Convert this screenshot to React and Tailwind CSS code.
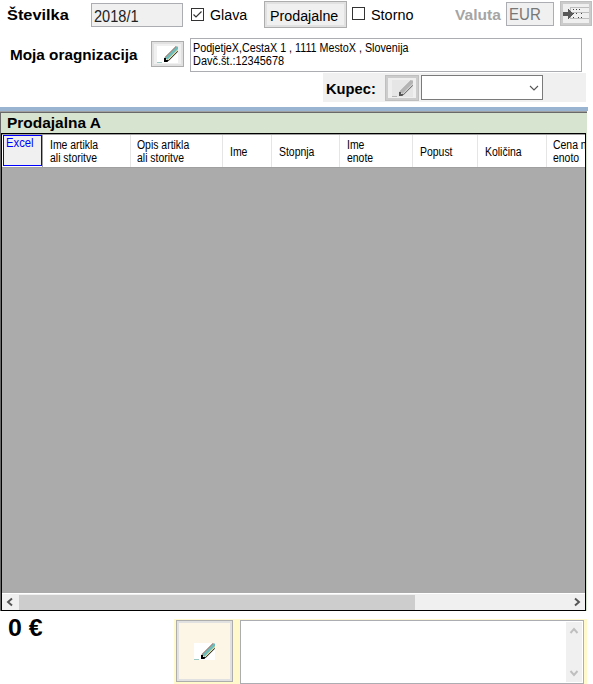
import React from "react";

function Pencil({ disabled = false, className = "" }) {
  const body = disabled ? "#b4b4b4" : "#6dbcbc";
  const edge = disabled ? "#8f8f8f" : "#6b3a2a";
  const dark = disabled ? "#555555" : "#000000";
  return (
    <svg width="21" height="17" viewBox="0 0 21 17" className={className}>
      <rect width="21" height="17" fill={disabled ? "#e6e6e6" : "#ffffff"} />
      <path d="M8 12 19.5 .5H21V4.5L11 14.5z" fill={body} />
      <path d="M10.3 13.8 21 3.1V4.8L11.2 14.6z" fill={disabled ? "#d0d0d0" : "#e6dca0"} />
      <path d="M7.6 11.9 19.5 0" fill="none" stroke={edge} strokeWidth="0.9" />
      <path d="M11 15.2 21 5.2" fill="none" stroke={dark} strokeWidth="0.9" />
      <path d="M7 12h2v2h2v1.3L10.300 16H7z" fill={dark} />
      <path d="M0 16h5v1H0z" fill={disabled ? "#b5b5b5" : "#9cc8c4"} />
    </svg>
  );
}

function Chevron({ d, color, className = "" }) {
  return (
    <svg width="10" height="10" viewBox="0 0 10 10" className={className}>
      <path d={d} fill="none" stroke={color} strokeWidth="1.9" />
    </svg>
  );
}

function Check({ checked }) {
  return (
    <span className="flex h-[13px] w-[13px] items-center justify-center border border-[#333] bg-white">
      {checked && (
        <svg width="11" height="11" viewBox="0 0 11 11">
          <path d="M1.500 5.500 4 8l5.500-5.500" fill="none" stroke="#333" strokeWidth="1.2" />
        </svg>
      )}
    </span>
  );
}

const columns = [
  { lines: ["Ime artikla", "ali storitve"], cell: "w-[88px] pl-[7px]" },
  { lines: ["Opis artikla", "ali storitve"], cell: "w-[92px] pl-[6px]" },
  { lines: ["Ime"], cell: "w-[49px] pl-[7px]" },
  { lines: ["Stopnja"], cell: "w-[68px] pl-[7px]" },
  { lines: ["Ime", "enote"], cell: "w-[73px] pl-[7px]" },
  { lines: ["Popust"], cell: "w-[65px] pl-[7px]" },
  { lines: ["Količina"], cell: "w-[69px] pl-[7px]" },
  { lines: ["Cena na", "enoto"], cell: "w-[69px] pl-[6px]" },
];

export default function App() {
  return (
    <div className="h-[684px] w-[593px] overflow-hidden bg-white font-['Liberation_Sans',Arial,sans-serif] whitespace-nowrap text-black">
      <div className="flex h-[38px] items-start">
        <div className="ml-[7px] w-[84px] pt-[5px] text-[15px] leading-5 font-bold">
          <span className="inline-block origin-left scale-x-[1.09]">Številka</span>
        </div>
        <div className="mt-[3px] h-6 w-[92px] border border-[#abadb3] bg-[#f0f0f0] pl-[2px] text-[16px] leading-[25px] text-[#222]">
          <span className="inline-block origin-left scale-x-[.91]">2018/1</span>
        </div>
        <div className="mt-2 ml-2"><Check checked /></div>
        <span className="mt-[5px] ml-[6px] w-[54px] text-[14px] leading-5">
          <span className="inline-block origin-left scale-x-[1.02]">Glava</span>
        </span>
        <div className="mt-px h-[27px] w-[83px] border border-[#adadad] bg-[#f0f0f0]">
          <div className="h-full border-2 border-[#e1e1e1] pl-[3px] text-[14px] leading-[24px]">
            <span className="inline-block origin-left scale-x-[1.02]">Prodajalne</span>
          </div>
        </div>
        <div className="mt-[7px] ml-[5px]"><Check /></div>
        <span className="mt-[5px] ml-[6px] w-[84px] text-[14px] leading-5"><span className="inline-block origin-left scale-x-[1.03]">Storno</span></span>
        <span className="mt-[5px] w-[51px] text-[14px] leading-5 font-bold text-[#a5a5a5]"><span className="inline-block origin-left scale-x-[1.11]">Valuta</span></span>
        <div className="mt-[2px] h-6 w-12 border border-[#abadb3] bg-[#f0f0f0] pl-[2px] text-[16px] leading-[24px] text-[#777]">
          <span className="inline-block origin-left scale-x-[.94]">EUR</span>
        </div>
        <div className="mt-px ml-[6px] h-[25px] w-8 border border-[#bfbfbf] bg-[#cccccc]">
          <svg width="30" height="23" viewBox="0 0 30 23" shapeRendering="crispEdges">
            <rect x="2" y="2" width="26" height="19" fill="#efefef" />
            <path d="M9 5.500h19M9 10.500h19M9 16.500h19M9.500 5v12" stroke="#bdbdbd" fill="none" />
            <path d="M12 7.500h1m2 0h1m2 0h1M12 11.500h1m2 0h1m4 0h1M12 15.500h1m4 0h1m2 0h1" stroke="#444" />
            <path d="M2 10h5V7h1l4 5-4 5H7v-3H2z" fill="#595959" />
          </svg>
        </div>
      </div>

      <div className="flex h-[35px] items-start">
        <div className="ml-[10px] w-[141px] pt-[7px] text-[14px] leading-5 font-bold">
          <span className="inline-block origin-left scale-x-[1.093]">Moja oragnizacija</span>
        </div>
        <div className="mt-[3px] h-[26px] w-[33px] border border-[#adadad] bg-[#e1e1e1] p-[2px]">
          <div className="flex h-full items-center justify-center bg-[#f0f0f0]"><Pencil /></div>
        </div>
        <div className="ml-[6px] h-[34px] w-[392px] border border-[#abadb3] pt-[3px] pl-[2px] text-[12px] leading-[13px]">
          <div className="w-fit origin-left scale-x-[.895]">PodjetjeX,CestaX 1 , 1111 MestoX , Slovenija</div>
          <div className="w-fit origin-left scale-x-[.91]">Davč.št.:12345678</div>
        </div>
      </div>

      <div className="ml-[323px] flex h-[29px] w-[263px] items-start bg-[#f0f0f0]">
        <span className="mt-[6px] ml-[3px] w-[59px] text-[14px] leading-5 font-bold"><span className="inline-block origin-left scale-x-[1.05]">Kupec:</span></span>
        <div className="mt-[2px] h-[26px] w-[34px] border border-[#bfbfbf] bg-[#cccccc] p-[2px]">
          <div className="flex h-full items-center justify-center bg-[#efefef]"><Pencil disabled /></div>
        </div>
        <div className="mt-[2px] ml-[2px] flex h-[25px] w-[122px] items-center justify-end border border-[#7a7a7a] bg-white pr-[3px]">
          <svg width="10" height="8" viewBox="0 0 10 8"><path d="M1 2l4 4 4-4" fill="none" stroke="#555" strokeWidth="1.1" /></svg>
        </div>
      </div>

      <div className="mt-[5px] h-[4px] w-[588px] bg-[#99b4d1]" />
      <div className="h-px w-[587px] bg-[#a0a0a0]" />
      <div className="flex h-[499px] w-[587px] flex-col border-t border-l border-[#696969] bg-[#d7e4d0]">
        <div className="h-[20px] w-[586px] pl-[6px] text-[15px] leading-[19px] font-bold">
          <span className="inline-block origin-left scale-x-[1.03]">Prodajalna A</span>
        </div>
        <div className="flex h-[478px] w-[585px] flex-col border border-black bg-[#ababab]">
          <div className="flex h-[34px] w-full shrink-0 overflow-hidden border-t border-b border-[#a0a0a0] bg-white">
            <div className="h-full w-[41px] shrink-0 border-r border-[#a0a0a0] pl-px">
              <div className="h-[31px] w-[39px] border border-[#0000ff] bg-[#f0f0f0] pl-[2px] text-[12px] leading-[15px] text-[#0000ff]">
                <span className="inline-block origin-left scale-x-[.94]">Excel</span>
              </div>
            </div>
            {columns.map((c, i) => (
              <div key={i} className={`flex h-full shrink-0 flex-col justify-center border-r border-[#e5e5e5] pt-[2px] text-[12px] leading-[13px] ${c.cell}`}>
                {c.lines.map((line) => (
                  <span key={line} className="w-fit origin-left scale-x-[.87]">{line}</span>
                ))}
              </div>
            ))}
          </div>
          <div className="flex-1" />
          <div className="flex h-[17px] items-center border-t border-white bg-[#f0f0f0]">
            <Chevron d="M7 1.500 3 5l4 3.500" color="#555" className="ml-[3px]" />
            <div className="ml-[4px] h-[15px] w-[396px] bg-[#cdcdcd]" />
            <Chevron d="M3 1.500 7 5 3 8.500" color="#555" className="mr-[3px] ml-auto" />
          </div>
        </div>
      </div>

      <div className="mt-[8px] flex h-[65px] items-start">
        <div className="h-full w-[174px] shrink-0 pl-[8px] text-[24px] leading-[17px] font-bold">
          <span className="inline-block origin-left scale-x-[1.04]">0 €</span>
        </div>
        <div className="flex h-full w-[413px] items-start bg-[#fff9cc] pt-px pl-[2px]">
          <div className="h-[62px] w-[57px] border border-[#adadad] bg-[#e1e1e1] p-[2px]">
            <div className="flex h-full items-center justify-center bg-[#fdf5e6]"><Pencil /></div>
          </div>
          <div className="ml-[7px] flex h-[64px] w-[344px] justify-end border border-[#abadb3] bg-white p-px">
            <div className="flex h-full w-4 flex-col items-center justify-between bg-[#f0f0f0] py-[4px]">
              <Chevron d="M1.500 7 5 3l3.500 4" color="#bfbfbf" />
              <Chevron d="M1.500 3 5 7l3.500-4" color="#bfbfbf" />
            </div>
          </div>
        </div>
      </div>
    </div>
  );
}
